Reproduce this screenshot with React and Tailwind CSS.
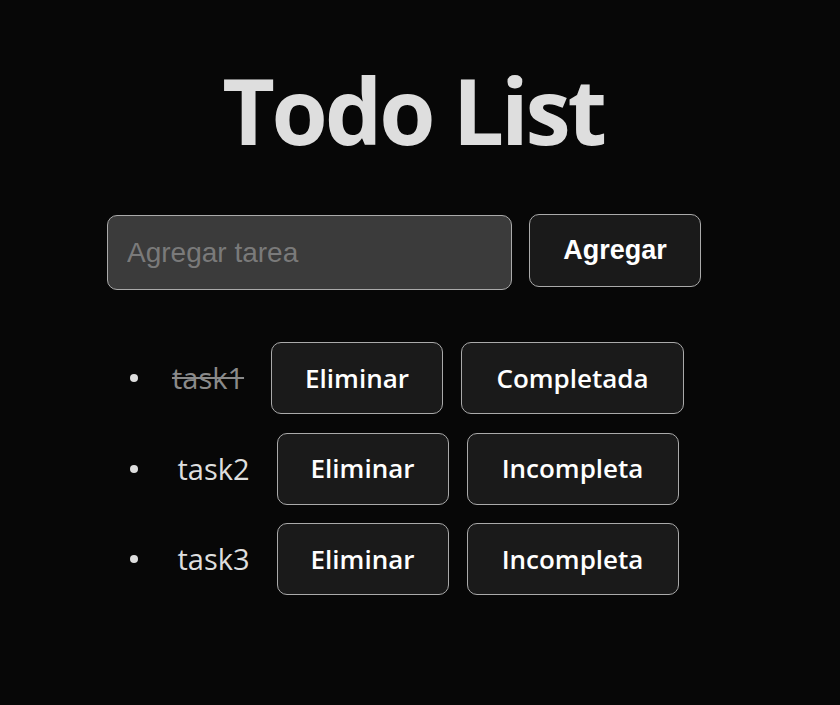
import React from "react";

const tasks = [
  { name: "task1", done: true },
  { name: "task2", done: false },
  { name: "task3", done: false },
];

export default function App() {
  return (
    <div className="w-[840px] h-[705px] bg-[#070707] text-[#dedede] [font-family:'Open_Sans',sans-serif] overflow-hidden">
      <div className="pt-[50px] flex justify-center">
        <h1 className="text-[91px] leading-[120px] font-bold tracking-[-3.2px] text-[#dedede] ml-[-14px]">
          Todo List
        </h1>
      </div>
      <div className="flex mt-[44px] pl-[107px] items-start">
        <input
          placeholder="Agregar tarea"
          className="mt-[1px] w-[405px] h-[75px] rounded-[10px] border border-[#aaaaaa] bg-[#3b3b3b] px-[19px] text-[28px] text-white placeholder:text-[#7a7a7a] [font-family:'Liberation_Sans',sans-serif] outline-none"
        />
        <button className="ml-[17px] w-[172px] h-[73px] rounded-[10px] border border-[#aaaaaa] bg-[#1a1a1a] text-white text-[27px] font-bold [font-family:'Liberation_Sans',sans-serif]">
          Agregar
        </button>
      </div>
      <div className="mt-[52px] flex flex-col gap-[18.5px]">
        {tasks.map((t) => (
          <div key={t.name} className="flex items-center pl-[130px]">
            <span className="w-[8px] h-[8px] rounded-full bg-[#dedede]" />
            <div className="w-[580px] flex justify-center items-center">
              <span
                className={
                  "text-[29px] " +
                  (t.done ? "line-through text-[#8a8a8a]" : "text-[#dedede]")
                }
              >
                {t.name}
              </span>
              <button className="ml-[27px] w-[172px] h-[72px] rounded-[10px] border border-[#aaaaaa] bg-[#1a1a1a] text-white text-[26px] font-semibold">
                Eliminar
              </button>
              <button
                className={
                  "ml-[18px] h-[72px] rounded-[10px] border border-[#aaaaaa] bg-[#1a1a1a] text-white text-[26px] font-semibold " +
                  (t.done ? "w-[223px]" : "w-[212px]")
                }
              >
                {t.done ? "Completada" : "Incompleta"}
              </button>
            </div>
          </div>
        ))}
      </div>
    </div>
  );
}
